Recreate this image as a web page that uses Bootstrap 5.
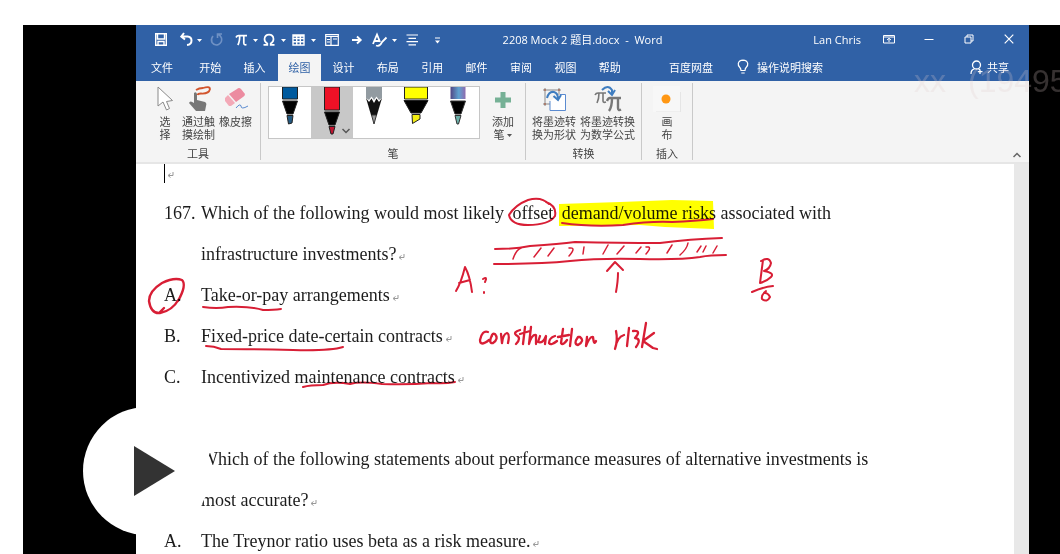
<!DOCTYPE html>
<html lang="zh-CN">
<head>
<meta charset="utf-8">
<meta name="viewport" content="width=device-width, initial-scale=1">
<title>2208 Mock 2 题目.docx - Word</title>
<link href="https://cdn.jsdelivr.net/npm/bootstrap@5.3.0/dist/css/bootstrap.min.css" rel="stylesheet">
<style>
  body { font-family: "Open Sans", "Noto Sans CJK SC", sans-serif; font-size: 11px; line-height: 13px; background: #fff; }
  button { border: 0; background: none; padding: 0; color: inherit; }
  svg { display: block; flex: none; }
  .stage { margin: 25px 0 0 23px; height: calc(100vh - 25px); background: #000; }
  .gutter-start { flex: 0 0 113px; }
  .gutter-end { flex: 0 0 31px; }
  .word-win { background: #fff; min-width: 0; }
  .blue-head { background: #3061a6; color: #fff; flex: none; }
  .title-row { display: grid; grid-template-columns: 1fr auto 1fr; height: 28px; align-items: center; }
  .quick { padding-left: 18px; }
  .win-btn { width: 40px; height: 28px; display: grid; place-items: center; }
  .tab-row { height: 28px; align-items: stretch; }
  .tab-row button { white-space: nowrap; }
  .file-tab { width: 52px; }
  .main-tabs { display: grid; grid-template-columns: repeat(10, 1fr); width: 444px; }
  .main-tabs .on { background: #f4f4f4; color: #3061a6; margin: 1px 0 0 1px; }
  .baidu { margin-left: 37px; }
  .tell { margin-left: 24px; }
  .share { margin-right: 20px; }
  .ribbon { background: #f4f4f4; color: #444; height: 83px; flex: none; border-bottom: 2px solid #e6e6e6; position: relative; }
  .rgroup { border-right: 1px solid #c9c9c9; margin: 2px 0; padding-top: 3px; display: flex; flex-direction: column; justify-content: space-between; }
  .tools-g { width: 125px; }
  .pens-g { width: 265px; }
  .convert-g { width: 116px; }
  .insert-g { width: 51px; }
  .rbtn { display: flex; flex-direction: column; align-items: center; gap: 3px; line-height: 13px; white-space: nowrap; }
  .rbtn svg { height: 26px; }
  .rbtn .drop { display: inline-block; height: 5px; }
  .glabel { text-align: center; line-height: 13px; }
  .gallery { background: #fff; border: 1px solid #c6c6c6; height: 53px; width: 212px; margin: 0 12px 0 7px; display: grid; grid-template-columns: repeat(5, 1fr); }
  .gallery .on { background: #c8c8c8; }
  .gallery button { display: flex; justify-content: center; align-items: flex-start; position: relative; }
  .fold { position: absolute; right: 3px; bottom: 4px; }
  .doc { font-family: "Liberation Serif", "Noto Sans CJK SC", serif; font-size: 18px; line-height: 41px; color: #1c1c1c; padding: 0 14px 0 28px; position: relative; min-height: 0; overflow: hidden; }
  .caret-row { height: 29px; display: flex; align-items: flex-start; }
  .caret-bar { width: 1px; height: 19px; background: #000; }
  .item { display: grid; grid-template-columns: 37px 1fr; margin: 0; white-space: nowrap; }
  .ret { display: inline-block; vertical-align: baseline; margin-left: 2px; }
  .blank { height: 41px; }
  .ink { position: absolute; left: 0; top: 0; mix-blend-mode: multiply; }
  .scroll-track { position: absolute; right: 0; top: 0; bottom: 0; width: 15px; background: #e8e8e8; }
  .play { position: absolute; left: 60px; top: 382px; width: 128px; height: 128px; border-radius: 50%; background: #fff; display: grid; place-items: center; }
  .wmark { position: absolute; left: 891px; top: 38px; font: 32px/37px "Liberation Sans", sans-serif; color: rgba(225,205,205,.24); gap: 22px; white-space: nowrap; pointer-events: none; }
</style>
</head>
<body>
<main class="stage d-flex position-relative overflow-hidden">
  <div class="gutter-start"></div>
  <section class="word-win flex-grow-1 d-flex flex-column">
    <header class="blue-head">
      <div class="title-row">
        <div class="quick">
          <svg width="295" height="20" viewBox="154 29 295 20" fill="none" stroke="#fff" stroke-width="1.4" role="img" aria-label="快速访问工具栏">
            <path d="M155.700 33.700H166.300V45.300H155.700ZM157.500 34V39H164.500V34M158 45V41.500H164V45" />
            <path d="M184 33L181.300 36.500L185 39.500M182 36.500H187.500Q191.500 37 191.500 40.500Q191.500 44.500 187 45" stroke-width="2"/>
            <path d="M213 36Q210.500 39 212 42.500Q214.500 46 218.500 44.500Q222.500 42.500 221.500 38Q220.500 35.500 218.500 34.500M217.500 38V34H222" stroke="#6f91c4" stroke-width="1.600"/>
            <path d="M236 37.500Q237 35.500 239 35.700H247M239.700 36Q239.700 42 237.800 45M243.800 36V43Q244 45.500 246.500 44.500" stroke-width="1.700"/>
            <path d="M263.500 44.800H267.300V43.500Q264.500 42 264.500 39Q265 34.700 269 34.700Q273.200 34.700 273.500 39Q273.500 42 270.700 43.500V44.800H274.500" stroke-width="1.700"/>
            <path d="M293 35H304V45H293ZM293 38.500H304M293 41.700H304M296.700 36V45M300.300 36V45M293 36H304"/>
            <path d="M325.700 34.700H338.300V45.300H325.700ZM325.700 36.500H338.300M331 37V45M327 39.500H330M327 42H330M333 39H337" stroke-width="1.200"/>
            <path d="M352 40H360.500M357 36.500L360.700 40L357 43.500" stroke-width="1.900"/>
            <path d="M373 44L377 34.500L380 42M374.300 41H379.500M376 45.500Q380 47 382 42L386.500 37.500" stroke-width="1.800"/>
            <path d="M406.500 35H418M408.500 38.300H416M406.500 41.600H418M408.500 44.900H416" stroke-width="1.200"/>
            <path d="M435 38H440" stroke-width="1"/>
            <path d="M197 39H202L199.500 42ZM253 39H258L255.500 42ZM281 39H286L283.500 42ZM311 39H316L313.500 42ZM392 39H397L394.500 42ZM435 40.500H440L437.500 43.500Z" fill="#fff" stroke="none"/>
          </svg>
        </div>
        <div>2208 Mock 2 题目.docx&nbsp; -&nbsp; Word</div>
        <div class="d-flex justify-content-end align-items-center">
          <span class="me-2">Lan Chris</span>
          <button class="win-btn" aria-label="功能区显示选项"><svg width="12" height="10" viewBox="0 0 12 10" fill="none" stroke="#fff"><path d="M.5 1.500H11.500V9H.5ZM.5 3H11.500M6 8V4.500M4 6L6 4.300L8 6"/></svg></button>
          <button class="win-btn" aria-label="最小化"><svg width="10" height="10" viewBox="0 0 10 10" stroke="#fff"><path d="M.5 5.500H9.500"/></svg></button>
          <button class="win-btn" aria-label="还原"><svg width="10" height="10" viewBox="0 0 10 10" fill="none" stroke="#fff"><path d="M1 3H7V9H1ZM3 3V1H9V7H7"/></svg></button>
          <button class="win-btn" aria-label="关闭"><svg width="10" height="10" viewBox="0 0 10 10" stroke="#fff" stroke-width="1.200"><path d="M.7 .7L9.300 9.300M9.300 .7L.7 9.300"/></svg></button>
        </div>
      </div>
      <nav class="tab-row d-flex">
        <button class="file-tab">文件</button>
        <div class="main-tabs">
          <button>开始</button><button>插入</button><button class="on">绘图</button><button>设计</button><button>布局</button><button>引用</button><button>邮件</button><button>审阅</button><button>视图</button><button>帮助</button>
        </div>
        <button class="baidu">百度网盘</button>
        <button class="tell d-flex align-items-center gap-2">
          <svg width="12" height="16" viewBox="0 0 12 16" fill="none" stroke="#fff" stroke-width="1.200"><path d="M4 11.500Q4 9.500 2.500 8Q1 6.500 1.300 4.500Q2 1.300 6 1.200Q10 1.300 10.700 4.500Q11 6.500 9.500 8Q8 9.500 8 11.500ZM4.300 14H7.700"/></svg>
          操作说明搜索</button>
        <button class="share d-flex align-items-center gap-1 ms-auto">
          <svg width="13" height="15" viewBox="0 0 13 15" fill="none" stroke="#fff" stroke-width="1.300"><circle cx="6.500" cy="5" r="4"/><path d="M1 14Q1 9.500 4.500 8.800M8.500 8.800L10 10M10 9.500V14M7.800 11.700H12.500"/></svg>
          共享</button>
      </nav>
    </header>

    <div class="ribbon d-flex">
      <div class="rgroup tools-g">
        <div class="d-flex ps-3">
          <button class="rbtn ms-1 me-2">
            <svg width="18" viewBox="0 0 18 26" fill="#fff" stroke="#8a8a8a"><path d="M2 1V20L7 16L10.500 24L13.500 22.500L10.500 15.500L16.500 14.500Z"/></svg>
            <span>选<br>择</span></button>
          <button class="rbtn me-1">
            <svg width="26" viewBox="0 0 26 26" fill="none"><path d="M8 7Q10 5 11 8V14L19 16Q21 17 20 20L19 25H10L3 17Q4 14 8 17Z" fill="#777"/><path d="M10 4Q13 2 17 2Q24 0 24 3Q23 8 15 7.500Q12 7.500 11.500 9" stroke="#d2552d" stroke-width="1.800"/></svg>
            <span>通过触<br>摸绘制</span></button>
          <button class="rbtn justify-content-start">
            <svg width="26" viewBox="0 0 26 26"><path d="M14 3Q16 1 18 3L22 8Q22 10 20 11L13 16L6 8Z" fill="#ec8ba0"/><path d="M5 9L12 17L8 20H6L2 15V12Z" fill="#f3a9b7"/><path d="M13 22Q17 17 18 20Q18 24 25 20" fill="none" stroke="#5b8bd0"/></svg>
            <span>橡皮擦</span></button>
        </div>
        <div class="glabel">工具</div>
      </div>

      <div class="rgroup pens-g">
        <div class="d-flex">
          <div class="gallery">
            <button aria-label="蓝色笔"><svg width="18" height="42" viewBox="0 0 18 42" stroke="#222"><path d="M1.500 0H16.500V12H1.500Z" fill="#005a9e"/><path d="M1.500 14H16.500L12 27H6Z" fill="#000"/><path d="M6 28.500H12L11 36L7.500 37Z" fill="#245b83"/></svg></button>
            <button class="on" aria-label="红色笔"><svg width="18" height="50" viewBox="0 0 18 50" stroke="#222"><path d="M1.500 0H16.500V23H1.500Z" fill="#ee1126"/><path d="M1.500 25H16.500L12 38H6Z" fill="#000"/><path d="M6 39.500H12L10 47H8Z" fill="#c01530"/></svg>
              <svg class="fold" width="8" height="6" viewBox="0 0 8 6" fill="none" stroke="#555"><path d="M.5 1L4 4.500L7.500 1" stroke-width="1.500"/></svg></button>
            <button aria-label="铅笔"><svg width="18" height="42" viewBox="0 0 18 42"><path d="M1 0H17V12H1Z" fill="#929ba1"/><path d="M1 11H17L12 28H6Z" fill="#111"/><path d="M1 11L4 15L6.500 11.500L9 16L11.500 11.500L14 15L17 11V8H1Z" fill="#fff"/><path d="M1 0H17V11L14 13L11.500 9.500L9 13L6.500 9.500L4 13L1 11Z" fill="#929ba1"/><path d="M6.500 28H11.500L9 37Z" fill="#999" stroke="#333"/></svg></button>
            <button aria-label="荧光笔"><svg width="26" height="42" viewBox="0 0 26 42" stroke="#222"><path d="M1.500 0H24.500V12H1.500Z" fill="#ff0"/><path d="M1 13.500H25L18 26H8Z" fill="#000"/><path d="M9 27.500H17V32L9.500 36.500Z" fill="#f4ee12"/></svg></button>
            <button aria-label="银河笔"><svg width="18" height="42" viewBox="0 0 18 42" stroke="#333"><defs><linearGradient id="galaxy"><stop stop-color="#524785"/><stop offset=".55" stop-color="#5fa2d0"/><stop offset="1" stop-color="#8f6baf"/></linearGradient></defs><path d="M1.500 0H16.500V12H1.500Z" fill="url(#galaxy)" stroke="none"/><path d="M1.500 14H16.500L12 27H6Z" fill="#000"/><path d="M6 28.500H12L9.500 37H8Z" fill="#6cb2ab"/></svg></button>
          </div>
          <button class="rbtn">
            <svg width="18" viewBox="0 0 18 26"><path d="M6.500 6H11.500V11.500H17V16.500H11.500V22H6.500V16.500H1V11.500H6.500Z" fill="#76b196"/></svg>
            <span>添加<br>笔 <svg class="drop" width="5" viewBox="0 0 5 5"><path d="M0 0H5L2.500 3Z" fill="#555"/></svg></span></button>
        </div>
        <div class="glabel">笔</div>
      </div>

      <div class="rgroup convert-g">
        <div class="d-flex justify-content-center gap-1">
          <button class="rbtn">
            <svg width="26" viewBox="0 0 26 26" fill="none"><path d="M4 2V20M2 4H20M18 2V9M2 18H10" stroke="#888"/><path d="M3 3H5V5H3ZM17 3H19V5H17ZM3 17H5V19H3Z" fill="#a97c6e"/><path d="M9 15V24.500H24.500V8.500H19" fill="#fff" stroke="#5b8bd0"/><path d="M6 12Q8 5 13 6Q17 7 17 13M12.500 10L17 14L20 9" stroke="#3f7dc0" stroke-width="2"/></svg>
            <span>将墨迹转<br>换为形状</span></button>
          <button class="rbtn">
            <svg width="30" viewBox="0 0 30 26" fill="none" stroke="#777"><path d="M2 9Q3 7 5 7H13M6 7Q6 13 4 17M10 7V15Q10 17 13 16" stroke-width="1.600"/><path d="M14 15Q15 12 17 12H28M19 12Q19 21 16 25M25 12V22Q25 25 28 23.500" stroke-width="2.400"/><path d="M9 4Q15-2 19 4V8M15 5L19 9L22 4" stroke="#3f7dc0" stroke-width="2"/></svg>
            <span>将墨迹转换<br>为数学公式</span></button>
        </div>
        <div class="glabel">转换</div>
      </div>

      <div class="rgroup insert-g">
        <button class="rbtn">
          <svg width="28" viewBox="0 0 28 26"><path d="M0 0H27V26H0Z" fill="#f7f7f7"/><path d="M27.500 6V26H3" fill="none" stroke="#e5e5e5"/><circle cx="13" cy="13" r="4.500" fill="#ff9713"/></svg>
          <span>画<br>布</span></button>
        <div class="glabel">插入</div>
      </div>
      <button class="position-absolute bottom-0 end-0 me-2 mb-1" aria-label="折叠功能区"><svg width="8" height="6" viewBox="0 0 8 6" fill="none" stroke="#666" stroke-width="1.500"><path d="M.5 5L4 1.500L7.500 5"/></svg></button>
    </div>

    <article class="doc flex-grow-1">
      <svg width="0" height="0" class="position-absolute"><defs><symbol id="ret" viewBox="0 0 7 6"><path d="M6 0V3.500H1.500M3.500 1.500L1 3.500L3.500 5.500" fill="none" stroke="#999"/></symbol></defs></svg>
      <div class="caret-row"><span class="caret-bar"></span><svg class="ret mt-2" width="7" height="6"><use href="#ret"/></svg></div>
      <p class="item"><span>167.</span><span>Which of the following would most likely <span class="mx-1">offset</span> demand/volume risks associated with<br>infrastructure investments?<svg class="ret" width="7" height="6"><use href="#ret"/></svg></span></p>
      <p class="item"><span>A.</span><span>Take-or-pay arrangements<svg class="ret" width="7" height="6"><use href="#ret"/></svg></span></p>
      <p class="item"><span>B.</span><span>Fixed-price date-certain contracts<svg class="ret" width="7" height="6"><use href="#ret"/></svg></span></p>
      <p class="item"><span>C.</span><span>Incentivized maintenance contracts<svg class="ret" width="7" height="6"><use href="#ret"/></svg></span></p>
      <div class="blank"></div>
      <p class="item"><span>168.</span><span>Which of the following statements about performance measures of alternative investments is<br>most accurate?<svg class="ret" width="7" height="6"><use href="#ret"/></svg></span></p>
      <p class="item"><span>A.</span><span>The Treynor ratio uses beta as a risk measure.<svg class="ret" width="7" height="6"><use href="#ret"/></svg></span></p>

      <svg class="ink" width="878" height="389" viewBox="136 164 878 389" fill="none" stroke="#d81e35" stroke-width="2" stroke-linecap="round" stroke-linejoin="round" role="img" aria-label="手写批注">
        <path d="M559 204L620 202L672 200L713 201L714 229L665 227L640 225L559 226Z" fill="#ff0" stroke="none"/>
        <path d="M549 204Q541 196 528 200Q515 205 509 215Q511 225 528 225Q549 225 555 216Q557 206 546 202"/>
        <path d="M562 223Q590 227 623 225Q650 221 672 222Q695 221 713 219"/>
        <path d="M495 249Q515 249 530 246Q560 244 575 242Q620 243 660 243Q690 239 722 238M494 264Q540 264 570 261Q600 258 640 259Q680 260 700 257Q710 255 726 255"/>
        <path d="M513 259Q516 250 521 248M534 257L541 248M548 256L554 248M569 248Q577 247 569 256M584 247L583 254M603 254L608 245M617 254L624 246M636 253L641 247M646 247Q653 246 646 254M667 253L672 245M680 255Q687 249 688 243M697 252L701 246M703 252L706 246M713 253L717 246" stroke-width="1.500"/>
        <path d="M456 291Q461 283 465 267Q470 276 472 292M459 283L470 280M483 279Q488 276 485 282M484 292V293"/>
        <path d="M607 271L615 262L623 270M618 273Q618 281 616 292"/>
        <path d="M763 260L760 283M761 261Q769 256 771 263Q770 269 764 271Q775 273 771 277Q767 281 760 283M752 292Q763 287 773 286M766 291Q761 295 762 299Q767 303 770 297Q768 293 765 293"/>
        <path d="M178 301Q187 285 182 280Q174 277 162 283Q149 291 149 301Q151 314 160 313Q172 311 179 299M159 313L164 308" stroke-width="2.400"/>
        <path d="M203 307Q217 309 228 307Q250 306 263 310Q274 310 281 309M206 346Q214 346 221 349Q250 349 293 350Q330 351 343 347M303 387Q310 385 323 385Q334 381 350 384Q360 381 382 384Q407 385 432 383Q445 384 455 382"/>
        <path d="M488 332Q482 330 480 340Q480 347 489 340M492 335Q488 344 493 343Q499 339 495 334Q492 333 492 336M501 334L502 343Q503 334 507 333Q510 334 508 343M520 330Q513 332 516 335Q522 338 516 344M525 327L523 344M520 334L530 331M531 327L529 344Q532 334 536 335L536 344M540 336L538 342Q543 344 546 336L545 344M555 336Q549 338 549 343Q551 346 557 341M563 329L561 343Q563 346 567 340M558 337L569 335M572 329L570 346M578 337Q573 344 578 345Q585 341 580 337ZM587 337L586 346Q590 336 593 337Q594 346 596 341" stroke-width="2.300"/>
        <path d="M616 331Q618 340 615 349Q617 337 624 335M629 328L627 346M633 331Q642 330 635 338Q642 339 636 347M646 323L642 347M654 333L643 341L653 348L657 349" stroke-width="2.300"/>
      </svg>
      <div class="scroll-track"></div>
    </article>
  </section>
  <div class="gutter-end"></div>

  <button class="play" aria-label="播放"><svg width="42" height="50" viewBox="0 0 42 50" class="ms-3"><path d="M0 0L41 25L0 50Z" fill="#333"/></svg></button>
  <div class="wmark d-flex"><span>xx</span><span>(19495</span></div>
</main>
<script src="https://cdn.jsdelivr.net/npm/bootstrap@5.3.0/dist/js/bootstrap.bundle.min.js"></script>
</body>
</html>
